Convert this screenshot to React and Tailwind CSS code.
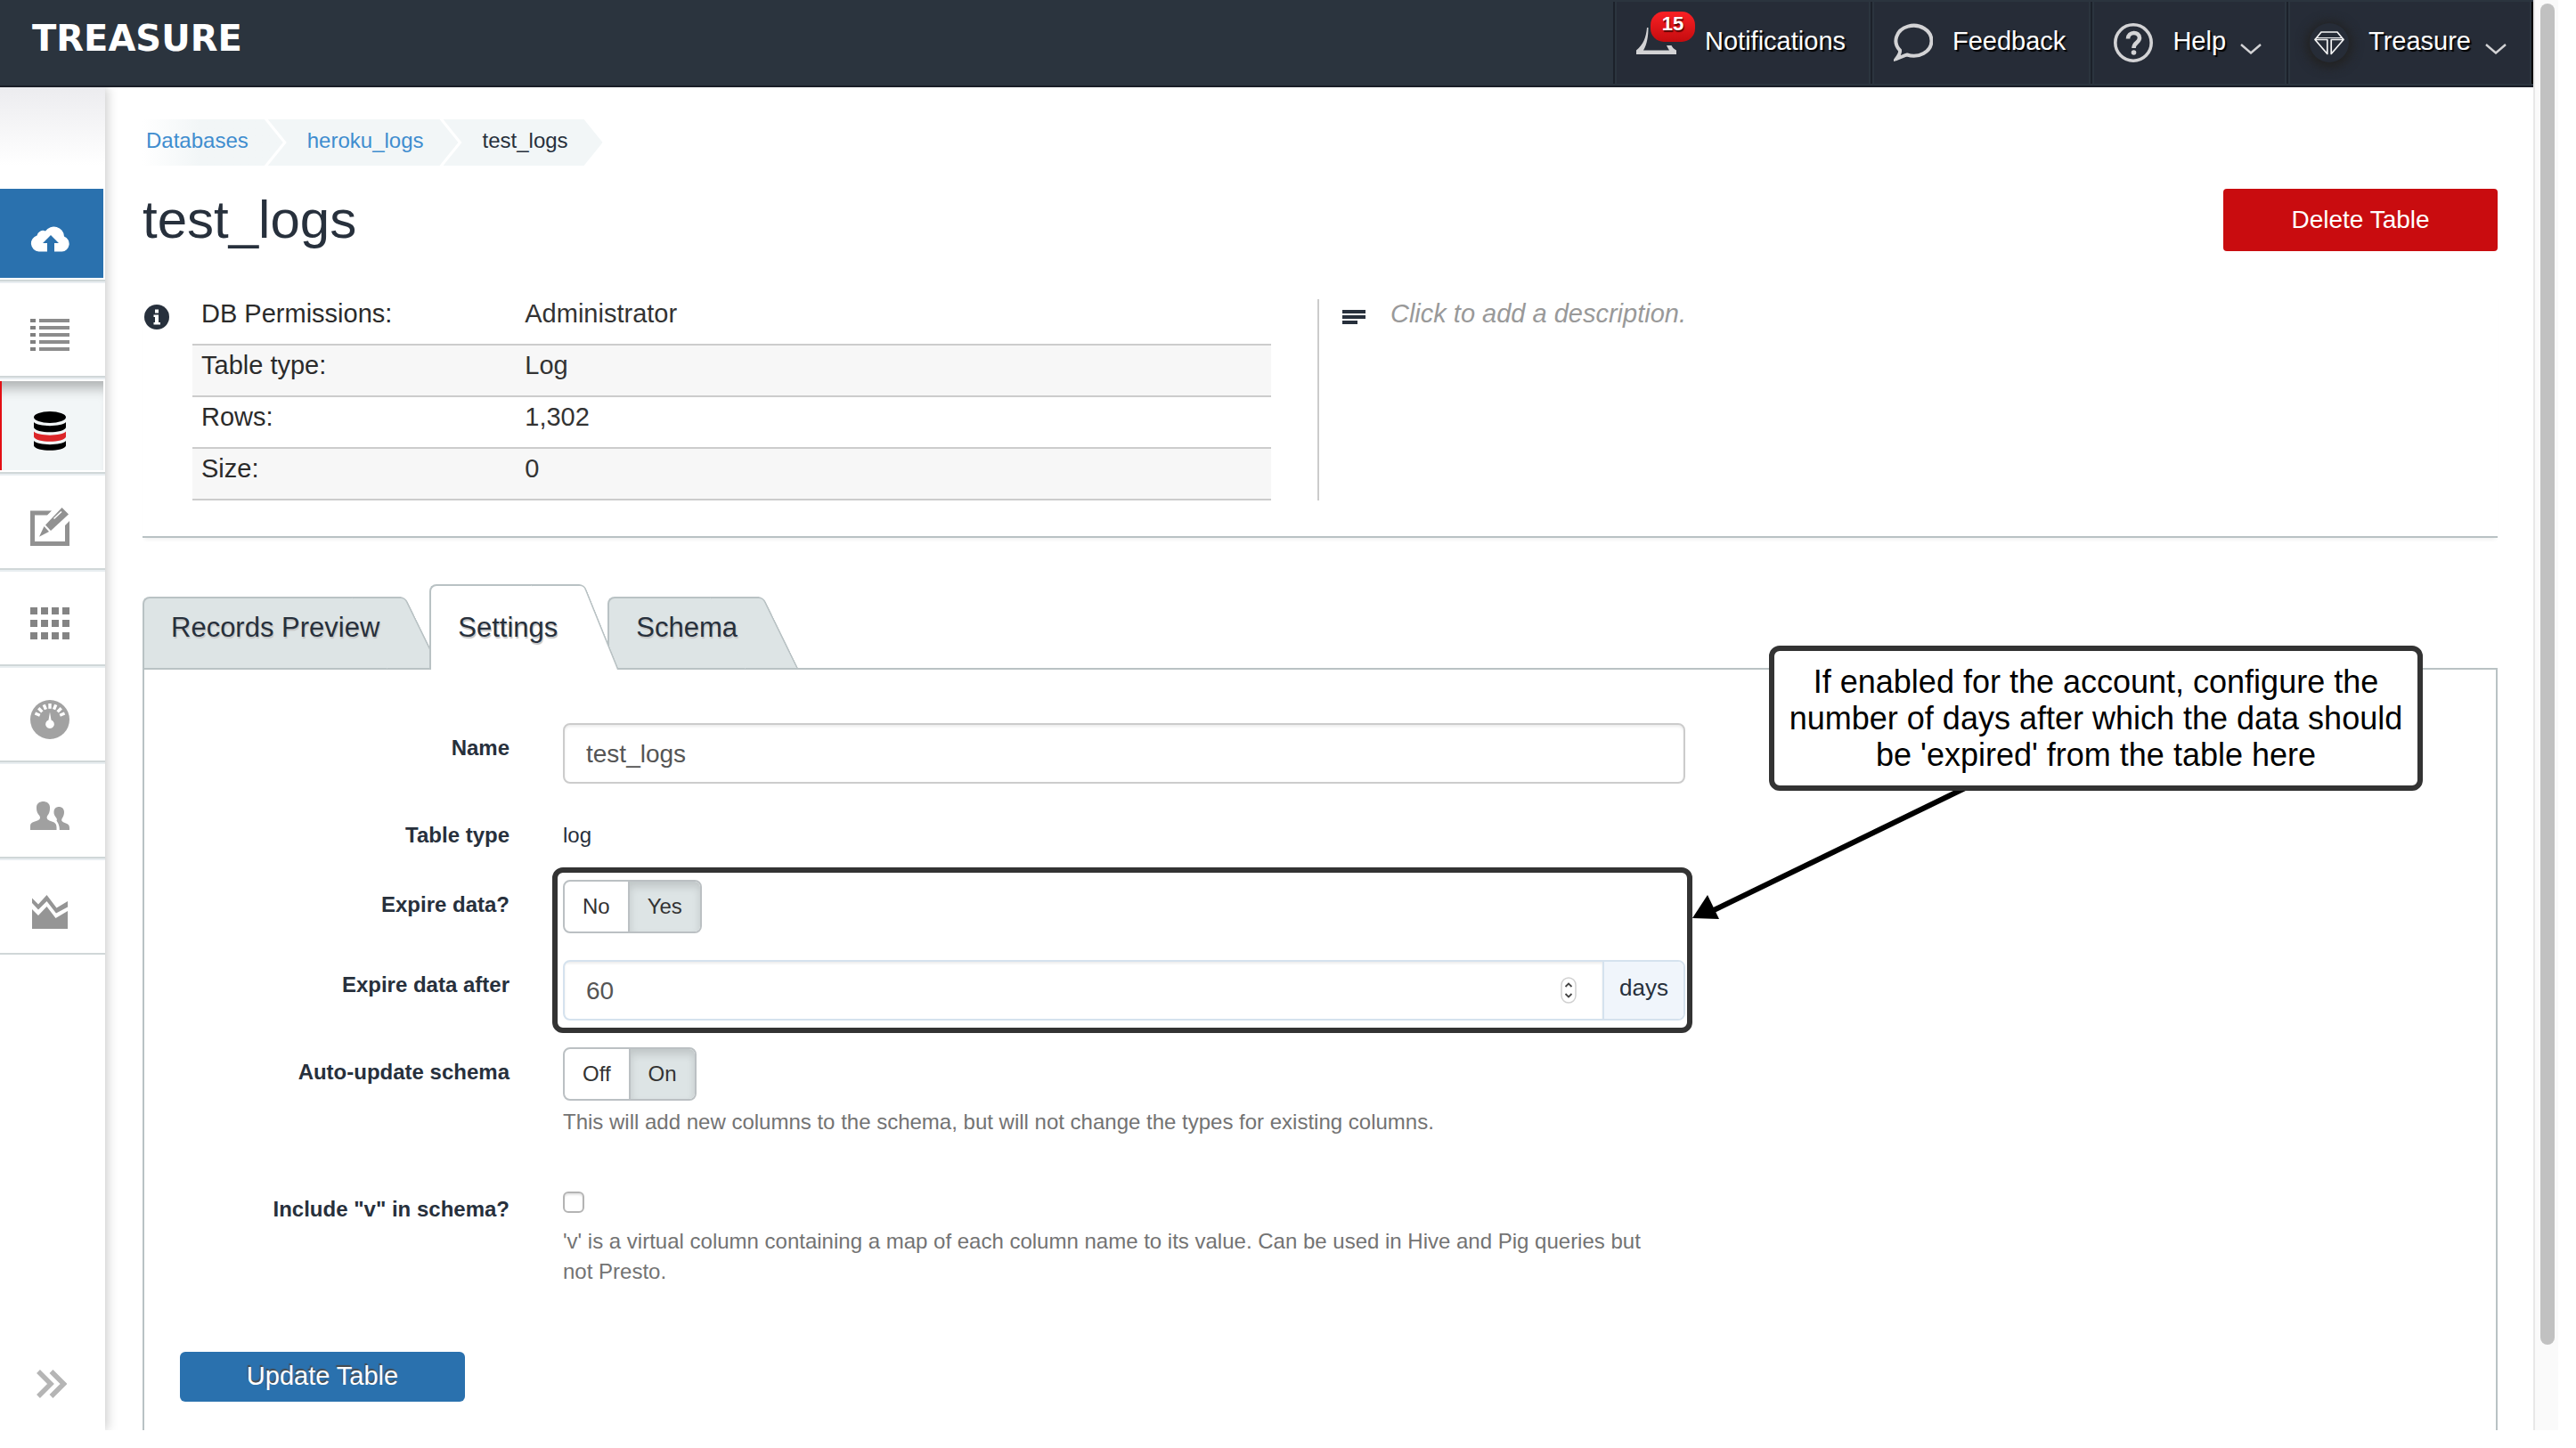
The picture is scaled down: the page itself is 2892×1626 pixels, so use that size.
import React, { useState } from "react";

/* ---------- header icons ---------- */

const BellIcon = () => (
  <svg viewBox="0 0 45 48" className="h-12 w-[45px]" fill="#d3d3d5" aria-hidden="true">
    <path d="M12 18C11 29 8 37 0 43.500V48H45V43.500C42 42 40.500 40 39.500 38H34C35 40 36 42 37 43.500H8C12 37 13.500 28 13.500 18Z" />
  </svg>
);

const BubbleIcon = () => (
  <svg viewBox="0 0 44 44" className="size-11" fill="none" stroke="#d3d3d5" strokeWidth="4" aria-hidden="true">
    <path d="M3 40C6 36 7.500 33 7 30.500A20 17 0 1 1 15 35.500C12 36 8 38.500 3 40Z" />
  </svg>
);

const HelpIcon = () => (
  <svg viewBox="0 0 44 44" className="size-11" fill="none" stroke="#d3d3d5" aria-hidden="true">
    <circle cx="22" cy="22" r="20.200" strokeWidth="3.600" />
    <path d="M16 17.500C16 9 29 9 29 16.500C29 22 22.500 21.500 22.500 28" strokeWidth="4.600" />
    <circle cx="22.500" cy="33" r="2.800" fill="#d3d3d5" stroke="none" />
  </svg>
);

const GemIcon = () => (
  <span className="block size-11 rounded-full bg-[#262c37] shadow-[0_2px_12px_4px_#222222]">
    <svg viewBox="0 0 44 44" className="size-11" fill="none" stroke="#f4f4f5" strokeWidth="1.700" strokeLinejoin="round" aria-hidden="true">
      <path d="M6 18.500L13 10H31L38 18.500" />
      <path d="M7.500 16.500H36.500" strokeWidth="1" />
      <path d="M6 18.500H19.800V34.500Z" />
      <path d="M38 18.500H24.200V34.500Z" />
    </svg>
  </span>
);

const Chevron = () => (
  <svg viewBox="0 0 24 12" className="mt-4 h-3 w-6" fill="none" stroke="#d3d3d5" strokeWidth="2.400" aria-hidden="true">
    <path d="M1 1L12 10.500L23 1" />
  </svg>
);

/* ---------- sidebar icons ---------- */

const CloudIcon = () => (
  <svg viewBox="0 0 44 29" className="h-[29px] w-11" fill="#ffffff" aria-hidden="true">
    <path d="M19 28.500V19H14L23 10L32 19H27V28.500H35.500A8.800 8.800 0 0 0 38 11.500A11.500 11.500 0 0 0 17 5.500A6.800 6.800 0 0 0 7.500 10.500A9.200 9.200 0 0 0 9.500 28.500Z" />
  </svg>
);

const ListIcon = () => (
  <svg viewBox="0 0 44 36" className="h-9 w-11" aria-hidden="true">
    {[0, 8, 16, 24, 32].map((y) => (
      <g key={y}>
        <rect x="0" y={y} width="6" height="4" fill="#808080" />
        <rect x="10" y={y} width="34" height="4" fill="#8c8c8c" />
      </g>
    ))}
  </svg>
);

const DatabaseIcon = () => (
  <svg viewBox="0 0 36 44" className="h-11 w-9" aria-hidden="true">
    <ellipse cx="18" cy="6.500" rx="18" ry="6.500" />
    <path d="M0 12C4 17.500 32 17.500 36 12V18C34 25 2 25 0 18Z" />
    <path d="M0 22.500C4 28 32 28 36 22.500V28.500C34 35.500 2 35.500 0 28.500Z" fill="#dc2629" />
    <path d="M0 33C4 38.500 32 38.500 36 33V38.500C34 45.500 2 45.500 0 38.500Z" />
  </svg>
);

const EditIcon = () => (
  <svg viewBox="0 0 44 44" className="size-11" fill="#919191" aria-hidden="true">
    <path d="M0 3.500H24L19 8.500H5V38H39V20L44 15V43H0Z" />
    <path d="M10 32.700L15.500 21L21 27Z" />
    <path d="M17 19.500L35.500 0L43 7.500L23 26Z" />
    <path d="M26.500 12.500L35 4.500" stroke="#ffffff" strokeWidth="1.600" />
  </svg>
);

const GridIcon = () => (
  <svg viewBox="0 0 44 36" className="h-9 w-11" fill="#848484" aria-hidden="true">
    {[0, 14, 28].map((y) => [0, 12, 24, 36].map((x) => <rect key={`${x}-${y}`} x={x} y={y} width="8" height="8" />))}
  </svg>
);

const GaugeIcon = () => (
  <svg viewBox="0 0 44 44" className="size-11" aria-hidden="true">
    <circle cx="22" cy="22" r="22" fill="#a2a2a2" />
    {[-67, -45, -22, 0, 22, 45, 67].map((a) => (
      <rect key={a} x="20.300" y="4" width="3.400" height="5.800" fill="#ffffff" transform={`rotate(${a} 22 22)`} />
    ))}
    <path d="M22 13.500L20.500 22.500A4.900 4.900 0 1 0 23.500 22.500Z" fill="#ffffff" />
  </svg>
);

const PeopleIcon = () => (
  <svg viewBox="0 0 44 32" className="h-8 w-11" fill="#a0a0a0" aria-hidden="true">
    <path d="M0 32V28C0 23 4 23 8 21.500C12 20 11.500 17 9.500 15C7 12 7 9 7 6.500C7 2 11 0 14.500 0S22 2 22 6.500C22 9 22 12 20 15C18 17 18 20 21.500 21.500C25 23 29.500 23 29.500 29V32Z" />
    <path d="M32.800 32C33 27 31 24 29.500 21.500C30.500 20 29.500 19 28.500 17.500C26.500 15 26.500 13 26.500 12C26.500 8 29 6 32.200 6S38 8 38 12C38 15 37 17 36 18.500C34.500 20.500 35 22.500 37.500 23.500C41 25 44 25 44 30V32Z" />
  </svg>
);

const ChartIcon = () => (
  <svg viewBox="0 0 40 38" className="h-[38px] w-10" fill="#959595" aria-hidden="true">
    <path d="M0 3.500L7 10.500L16.500 0L27.500 14.500L40 7V13.500L27 20.500L16.500 7L7 16.500L0 9Z" />
    <path d="M0 16L7 23L16.500 13L26.500 26L40 18V38H0Z" />
  </svg>
);

const navItems = [
  { label: "Upload", Icon: CloudIcon, kind: "primary" },
  { label: "Jobs", Icon: ListIcon },
  { label: "Databases", Icon: DatabaseIcon, kind: "active" },
  { label: "Query editor", Icon: EditIcon },
  { label: "Applications", Icon: GridIcon },
  { label: "Utilization", Icon: GaugeIcon },
  { label: "Team", Icon: PeopleIcon },
  { label: "Analytics", Icon: ChartIcon },
];

const itemStyles = {
  primary: "bg-[#2a71ae] pr-1",
  active: "bg-[#f2f6f7] border-l-2 border-[#e30f14] pr-1.5 shadow-[inset_0_18px_14px_-10px_rgba(0,0,0,0.28)]",
  plain: "bg-white pr-1",
};

/* ---------- page chrome ---------- */

function HeaderItem({ children, wide }) {
  return (
    <button
      type="button"
      className={`flex items-center border-l-2 border-[#1c212a] text-[29px] text-white [text-shadow:2px_2px_1px_#000] ${wide ? "[&>span]:gap-8" : "[&>span]:gap-[22px]"}`}
    >
      <span className="flex h-full items-center border-x-2 border-[#2b343e] bg-[#262c37] pr-[26px] pb-0.5 pl-[22px]">{children}</span>
    </button>
  );
}

function Header() {
  return (
    <header className="flex h-[98px] justify-between border-b-2 border-[#1a1e27] bg-[#2b343e]">
      <a href="#home" className="pl-9 font-['DejaVu_Sans',sans-serif] text-[40px] leading-[86px] font-bold text-white">
        TREASURE
      </a>
      <nav className="my-0.5 flex border-r-2 border-black" aria-label="Account">
        <HeaderItem wide>
          <span className="relative -mt-5 block">
            <BellIcon />
            <span className="absolute top-0 left-4 h-[34px] w-[50px] rounded-[15px] bg-linear-to-b from-[#fb2024] to-[#c40b0e] text-center text-[22px] leading-7 font-bold [text-shadow:1px_2px_1px_#5a0000]">
              15
            </span>
          </span>
          <span>Notifications</span>
        </HeaderItem>
        <HeaderItem>
          <span className="mt-0.5"><BubbleIcon /></span>
          <span>Feedback</span>
        </HeaderItem>
        <HeaderItem>
          <span className="mt-0.5"><HelpIcon /></span>
          <span className="flex items-center gap-4">Help <Chevron /></span>
        </HeaderItem>
        <HeaderItem>
          <span className="mt-0.5"><GemIcon /></span>
          <span className="flex items-center gap-4">Treasure <Chevron /></span>
        </HeaderItem>
      </nav>
    </header>
  );
}

function Sidebar() {
  return (
    <aside className="relative flex w-[118px] shrink-0 flex-col justify-between bg-white shadow-[2px_0_12px_rgba(0,0,0,0.22)]">
      <div>
        <div className="h-[110px] bg-linear-to-b from-[#ececef] to-white to-80%" />
        <ul>
          {navItems.map(({ label, Icon, kind = "plain" }) => (
            <li
              key={label}
              className="h-[108px] border-y-2 border-t-[#e9eef1] border-b-[#d0d7d8] py-0.5 pr-0.5 first:border-t-white"
            >
              <a
                href={`#${label.toLowerCase().replace(" ", "-")}`}
                aria-label={label}
                className={`flex h-full items-center justify-center pt-3 ${itemStyles[kind]}`}
              >
                <Icon />
              </a>
            </li>
          ))}
        </ul>
      </div>
      <button type="button" aria-label="Expand sidebar" className="mb-9 ml-[41px] self-start">
        <svg viewBox="0 0 34 32" className="h-8 w-[34px]" fill="none" stroke="#b5b5b5" strokeWidth="5.500" aria-hidden="true">
          <path d="M2 2L16 16L2 30M16.500 2L30.500 16L16.500 30" />
        </svg>
      </button>
    </aside>
  );
}

function Breadcrumb() {
  const shape =
    "-ml-[17px] bg-[#f2f6f7] pr-[39px] pl-11 [clip-path:polygon(0_0,calc(100%_-_21px)_0,100%_50%,calc(100%_-_21px)_100%,0_100%,21px_50%)]";
  return (
    <nav aria-label="Breadcrumb">
      <ol className="flex text-2xl leading-[48px] *:pb-1">
        <li className="bg-linear-to-r from-white to-[#f2f6f7] to-40% pr-[39px] pl-1 [clip-path:polygon(0_0,calc(100%_-_21px)_0,100%_50%,calc(100%_-_21px)_100%,0_100%)]">
          <a href="#databases" className="text-[#3f8dcf]">Databases</a>
        </li>
        <li className={shape}>
          <a href="#heroku_logs" className="text-[#3f8dcf]">heroku_logs</a>
        </li>
        <li className={shape} aria-current="page">test_logs</li>
      </ol>
    </nav>
  );
}

const facts = [
  ["DB Permissions:", "Administrator"],
  ["Table type:", "Log"],
  ["Rows:", "1,302"],
  ["Size:", "0"],
];

function Summary() {
  return (
    <section className="mt-12 flex border-b-2 border-[#b9c2c4] pb-10 shadow-[0_4px_4px_-2px_rgba(0,0,0,0.06)]">
      <svg viewBox="0 0 28 28" className="mt-3 ml-0.5 size-7 shrink-0" aria-hidden="true">
        <circle cx="14" cy="14" r="14" fill="#27303c" />
        <path d="M12 5.500H16V9.500H12ZM10.500 11.500H16V20H18V22.500H10.500V20H12V14H10.500Z" fill="#ffffff" />
      </svg>
      <table className="ml-[26px] w-[45.8%] border-collapse text-left text-[29px] leading-[44px] text-[#333333]">
        <tbody>
          {facts.map(([name, value]) => (
            <tr key={name} className="border-b-2 border-[#cccccc] even:bg-[#f7f7f7]">
              <th scope="row" className="w-[30%] pb-3 pl-2.5 font-normal text-[#2b2b2b]">{name}</th>
              <td className="pb-3 pl-2.5">{value}</td>
            </tr>
          ))}
        </tbody>
      </table>
      <div className="mt-1.5 ml-[52px] flex flex-1 border-l-2 border-[#cccccc] pl-[26px]">
        <svg viewBox="0 0 26 16" className="mt-3 h-4 w-[26px]" fill="#27303c" aria-hidden="true">
          <path d="M0 0H26V4H0ZM0 6H26V10H0ZM0 12H17V16H0Z" />
        </svg>
        <button type="button" className="ml-7 self-start text-[29px] leading-8 text-[#999999] italic">
          Click to add a description.
        </button>
      </div>
    </section>
  );
}

/* ---------- tabs and form ---------- */

function Tab({ active, children }) {
  const look = active
    ? "z-10 bg-white pt-[27px] after:skew-x-[22deg] after:bg-white after:-right-[45px]"
    : "border-b-2 bg-[#dde4e5] pt-[13px] after:skew-x-[26deg] after:border-b-2 after:bg-[#dde4e5] after:-bottom-0.5 after:-right-[45px]";
  const height = active ? "pb-[27px] after:bottom-0" : "pb-[25px]";
  return (
    <button
      type="button"
      role="tab"
      aria-selected={Boolean(active)}
      className={`relative rounded-tl-lg border-t-2 border-l-2 border-[#b9c2c4] pr-6 pl-[30px] text-[31px] leading-10 text-[#27303c] [text-shadow:1px_2px_1px_#c4c4c4] after:absolute after:-top-0.5 after:w-[60px] after:origin-bottom after:rounded-tr-md after:border-t-2 after:border-r-2 after:border-[#b9c2c4] ${look} ${height}`}
    >
      <span className="relative z-10">{children}</span>
    </button>
  );
}

function Row({ label, htmlFor, children, className = "" }) {
  return (
    <div className={`grid grid-cols-[410px_minmax(0,1260px)] gap-x-[60px] ${className}`}>
      <label htmlFor={htmlFor} className="pt-[11px] text-right font-bold">{label}</label>
      <div>{children}</div>
    </div>
  );
}

function Toggle({ name, legend, options, value, onChange }) {
  return (
    <div role="radiogroup" aria-label={legend} className="flex w-fit overflow-hidden rounded-lg border-2 border-[#bbc0c3]">
      {options.map((option) => (
        <label
          key={option}
          className="relative px-5 py-[11px] text-[#333333] not-first:border-l-2 not-first:border-[#bbc0c3] has-checked:bg-[#dde4e5] has-checked:shadow-[inset_0_6px_10px_rgba(0,0,0,0.13)]"
        >
          <input
            type="radio"
            name={name}
            className="sr-only"
            checked={value === option}
            onChange={() => onChange(option)}
          />
          {option}
        </label>
      ))}
    </div>
  );
}

function Callout() {
  return (
    <>
      <svg viewBox="0 0 320 156" className="absolute top-32 right-[586px] z-20 h-[156px] w-80" aria-hidden="true">
        <path d="M310 5L26 143" stroke="#000000" strokeWidth="6" />
        <path d="M4 151L21 125L34 152Z" fill="#000000" />
      </svg>
      <p className="absolute -top-[27px] right-[82px] z-20 w-[734px] rounded-xl border-6 border-[#333333] bg-white py-3.5 text-center text-4xl leading-[41px] text-black">
        If enabled for the account, configure the
        <br />
        number of days after which the data should
        <br />
        be 'expired' from the table here
      </p>
    </>
  );
}

function SettingsForm() {
  const [tableName, setTableName] = useState("test_logs");
  const [expire, setExpire] = useState("Yes");
  const [days, setDays] = useState("60");
  const [autoUpdate, setAutoUpdate] = useState("On");
  const [includeV, setIncludeV] = useState(false);

  return (
    <form className="pt-[60px] text-2xl leading-[34px]" onSubmit={(e) => e.preventDefault()}>
      <Row label="Name" htmlFor="name">
        <input
          id="name"
          type="text"
          value={tableName}
          onChange={(e) => setTableName(e.target.value)}
          className="block h-[68px] w-full rounded-lg border-2 border-[#cccccc] px-6 pt-0.5 text-[28px] text-[#555555] shadow-[inset_0_2px_3px_rgba(0,0,0,0.08)]"
        />
      </Row>

      <Row label="Table type" htmlFor="type" className="mt-[30px]">
        <output id="type" className="block pt-[11px]">log</output>
      </Row>

      <div className="relative mt-[33px]">
        <Row label="Expire data?">
          <Toggle name="expire" legend="Expire data?" options={["No", "Yes"]} value={expire} onChange={setExpire} />
        </Row>
        <Row label="Expire data after" htmlFor="days" className="mt-[30px]">
          <div className="flex h-[68px] overflow-hidden rounded-lg border-2 border-[#d5e2ee]">
            <div className="relative flex-1">
              <input
                id="days"
                type="number"
                value={days}
                onChange={(e) => setDays(e.target.value)}
                className="size-full px-6 pt-0.5 text-[28px] text-[#555555] shadow-[inset_0_2px_3px_rgba(0,0,0,0.08)] [&::-webkit-inner-spin-button]:appearance-none"
              />
              <svg viewBox="0 0 18 30" className="absolute top-[17px] right-[29px] h-[30px] w-[18px]" fill="none" aria-hidden="true">
                <rect x="1" y="1" width="16" height="28" rx="8" fill="#ffffff" stroke="#d0d0d0" strokeWidth="1.500" />
                <path d="M5.500 11L9 7.500L12.500 11M5.500 19L9 22.500L12.500 19" stroke="#444444" strokeWidth="1.800" />
              </svg>
            </div>
            <span className="border-l-2 border-[#d5e2ee] bg-[#f0f5fb] px-[17px] pt-3 text-[26px]">days</span>
          </div>
        </Row>
        <div className="pointer-events-none absolute -inset-y-3.5 left-[458px] w-[1280px] rounded-xl border-6 border-[#333333]" />
      </div>

      <Row label="Auto-update schema" className="mt-[30px]">
        <Toggle name="auto-update" legend="Auto-update schema" options={["Off", "On"]} value={autoUpdate} onChange={setAutoUpdate} />
        <p className="mt-[7px] text-[#737373]">
          This will add new columns to the schema, but will not change the types for existing columns.
        </p>
      </Row>

      <Row label={'Include "v" in schema?'} htmlFor="include-v" className="mt-[53px]">
        <input
          id="include-v"
          type="checkbox"
          checked={includeV}
          onChange={(e) => setIncludeV(e.target.checked)}
          className="mt-2 block size-6 appearance-none rounded-md border-2 border-[#b4b4b4] bg-white shadow-[inset_0_2px_2px_rgba(0,0,0,0.1)] checked:bg-[#2a71ae]"
        />
        <p className="mt-[15px] pr-8 text-[#737373]">
          'v' is a virtual column containing a map of each column name to its value. Can be used in Hive and Pig queries but not Presto.
        </p>
      </Row>

      <button
        type="submit"
        className="mt-[73px] ml-10 block h-14 w-80 rounded-md bg-[#2a71ae] pb-0.5 text-[29px] text-white [text-shadow:-1px_-2px_1px_#4a4a4a]"
      >
        Update Table
      </button>
    </form>
  );
}

export default function App() {
  return (
    <div className="flex min-h-screen bg-white pr-5 pb-5 font-['Liberation_Sans',Arial,sans-serif] text-[#27303c]">
      <div className="flex min-w-0 flex-1 flex-col">
        <Header />
        <div className="flex flex-1 overflow-hidden">
          <Sidebar />
          <main className="flex min-w-0 flex-1 flex-col pt-9 pr-10 pl-[42px]">
            <Breadcrumb />
            <div className="mt-[26px] flex items-center justify-between">
              <h1 className="text-[60px] leading-[70px]">test_logs</h1>
              <button type="button" className="h-[70px] w-[308px] rounded-sm bg-[#c90c0f] text-[28px] text-white">
                Delete Table
              </button>
            </div>
            <Summary />
            <div role="tablist" className="relative z-10 mt-[52px] -mb-0.5 flex items-end gap-8">
              <Tab>Records Preview</Tab>
              <Tab active>Settings</Tab>
              <Tab>Schema</Tab>
            </div>
            <div role="tabpanel" className="relative flex-1 border-2 border-b-0 border-[#b9c2c4]">
              <SettingsForm />
              <Callout />
            </div>
          </main>
        </div>
      </div>
      <div className="w-7 border-l-2 border-[#e8e8e8] bg-[#fafafa] pt-1 pl-1.5" aria-hidden="true">
        <div className="h-[94%] w-4 rounded-full bg-[#c1c1c1]" />
      </div>
    </div>
  );
}
